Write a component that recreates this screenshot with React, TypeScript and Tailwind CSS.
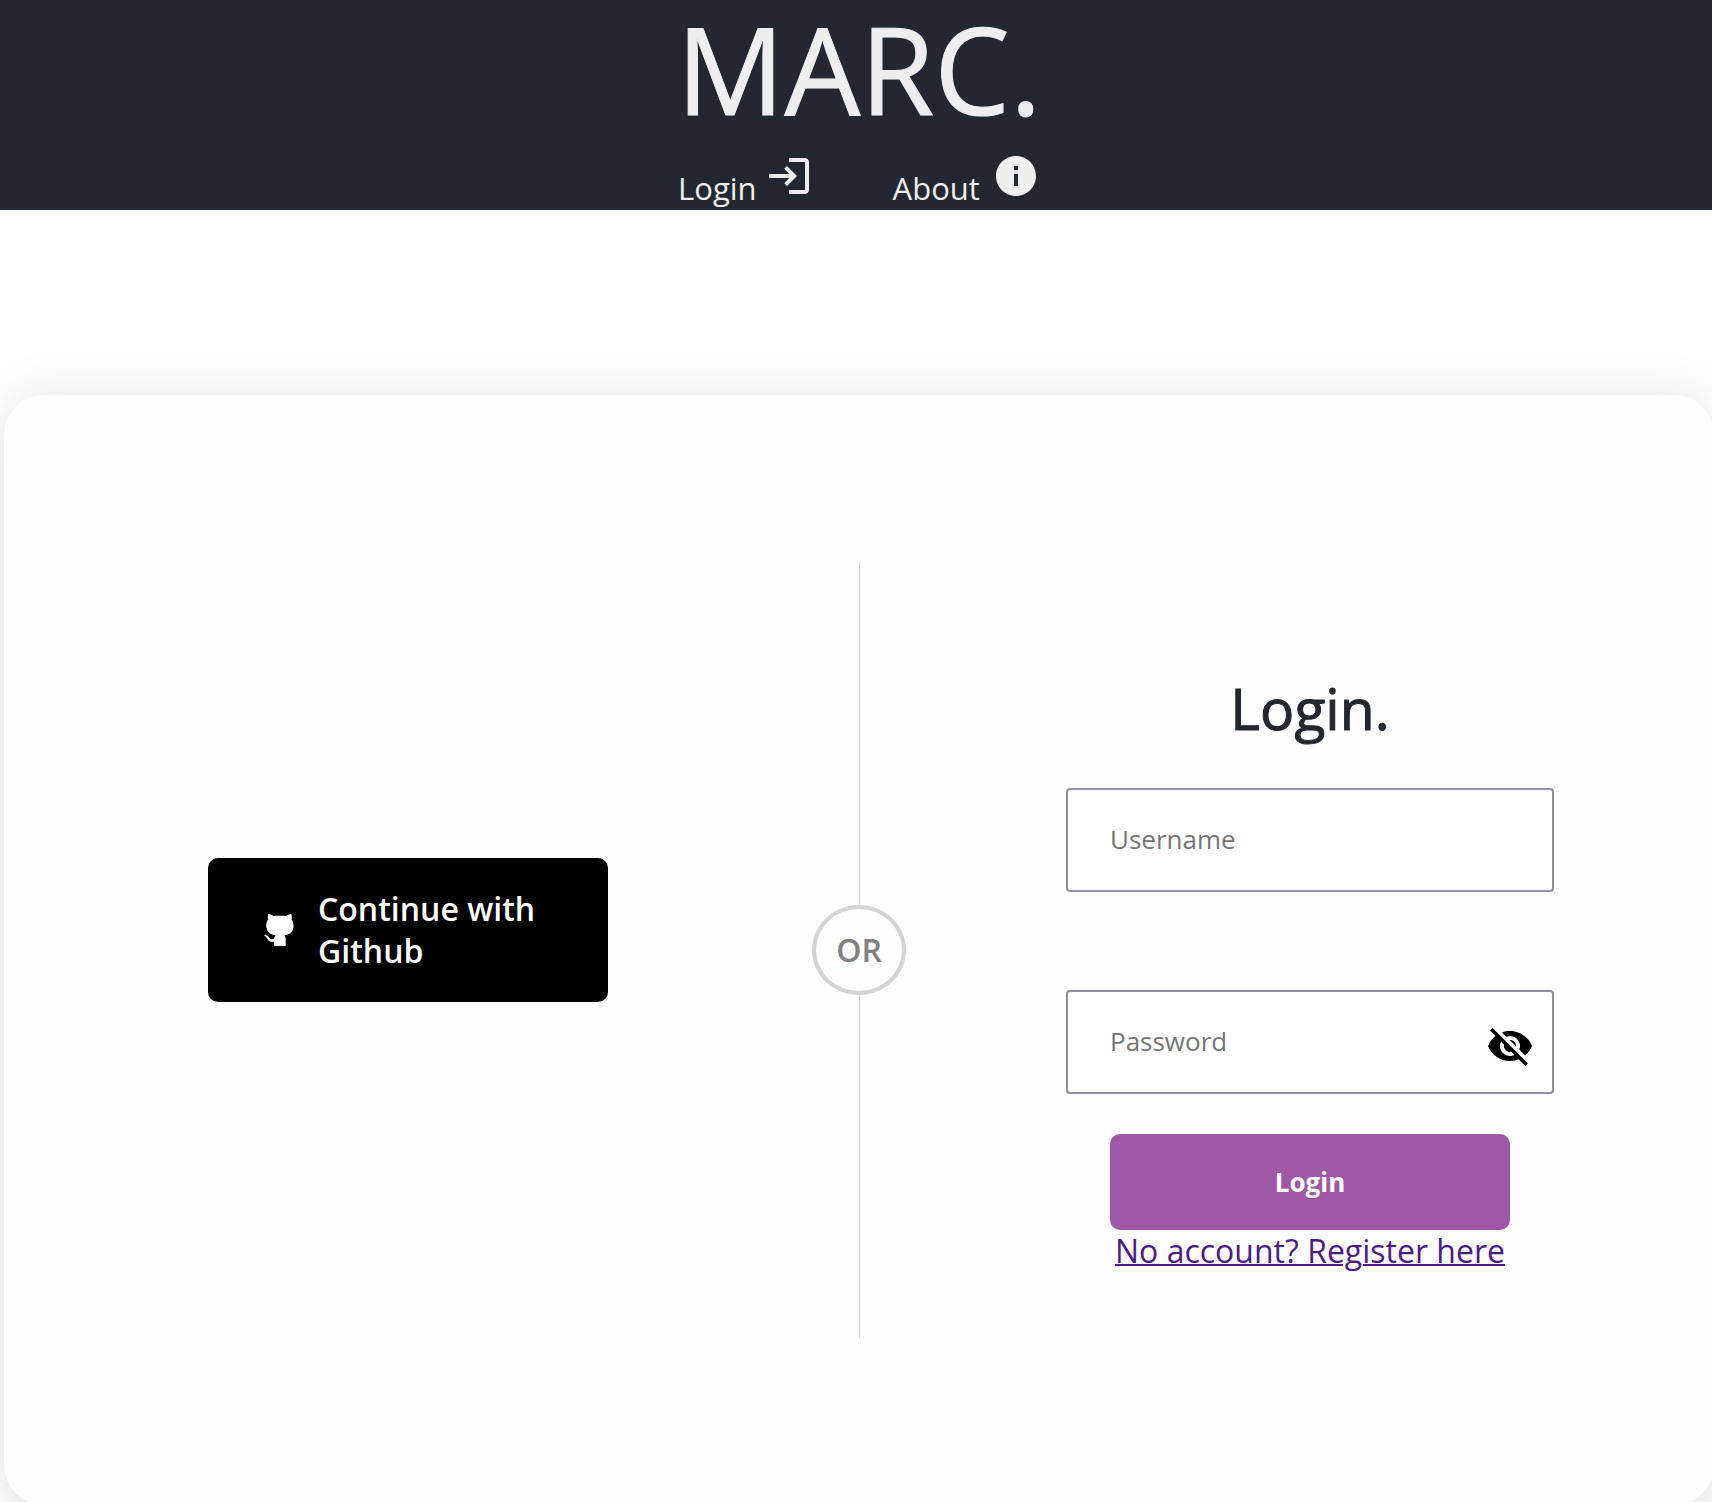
import { useState } from "react";
import { MdLogin, MdInfo, MdVisibilityOff, MdVisibility } from "react-icons/md";

function GithubCat() {
  return (
    <svg viewBox="0 0 30 34" className="h-[34px] w-[30px] shrink-0" fill="#fff" aria-hidden="true">
      <path d="M4.200 1C6.200 1.200 8 2 9.500 3.100C13 2.500 18.500 2.500 22 3.100C23.500 2 25.200 1.200 27.200 1C28 3 27.900 5 27.600 6.400C29 8.200 29.500 10 29.500 12.500C29.500 18.500 26.200 21.500 20.500 22.300C21.400 23.500 21.700 24.500 21.700 26V33H10.200V28.800C5.500 29.500 4 27.500 2.900 25.300C2.300 24.100 1.500 23.300 .4 22.700C.2 22 .9 21.700 1.800 21.900C3.500 22.200 4.400 23.400 5.300 24.700C6.500 26.300 8 26.500 10.200 25.800C10.300 24.300 10.700 23.200 11.500 22.300C5.800 21.500 2.200 18.500 2.200 12.500C2.200 10 2.800 8.200 4.200 6.400C3.700 4.800 3.600 2.800 4.200 1Z" />
    </svg>
  );
}

export default function App() {
  const [shown, setShown] = useState(false);
  const field =
    "h-[104px] w-full rounded border-2 border-[#8f8f9d] bg-white pl-[42px] pr-20 pb-0.5 text-[26px] text-[#232830] placeholder:text-[#757575] placeholder:opacity-100";

  return (
    <div className="flex min-h-screen flex-col overflow-hidden bg-white font-['Open_Sans',sans-serif]">
      <header className="flex h-[210px] flex-col items-center bg-[#232830] pl-1.5 text-[#eee]">
        <h1 className="h-[144px] text-[120px] leading-[138px] [-webkit-text-stroke:1px_#eee]">MARC.</h1>
        <nav className="flex gap-20 text-[31px] leading-10">
          <a href="#login" className="flex gap-2">
            <span className="mt-6">Login</span>
            <MdLogin className="mt-2 size-12" />
          </a>
          <a href="#about" className="flex gap-3">
            <span className="mt-6">About</span>
            <MdInfo className="mt-2 size-12" />
          </a>
        </nav>
      </header>

      <main className="-mr-[2px] mt-[185px] ml-1 flex h-[1110px] shrink-0 rounded-[40px] bg-[#fefefe] shadow-[0_10px_60px_rgba(0,0,0,0.14)]">
        <section className="flex flex-1 items-center justify-center pb-10">
          <button className="flex w-[400px] items-center gap-6 rounded-[10px] bg-black py-[30px] pr-10 pl-14 text-left text-[32px] leading-[42px] font-semibold text-white">
            <GithubCat />
            <span>Continue with Github</span>
          </button>
        </section>

        <div className="flex w-[94px] flex-col items-center py-[167px]">
          <div className="w-px flex-1 bg-[#d3d3d3]" />
          <div className="flex h-[90px] w-[94px] items-center justify-center rounded-[50%] border-4 border-[#d3d3d3] text-[32px] font-semibold text-[#808080]">
            OR
          </div>
          <div className="w-px flex-1 bg-[#d3d3d3]" />
        </div>

        <section className="flex flex-1 items-center justify-center pt-10">
          <form className="flex w-[488px] flex-col items-center" onSubmit={(e) => e.preventDefault()}>
            <h2 className="mb-10 text-[57px] leading-[80px] text-[#232830] [-webkit-text-stroke:1px_#232830]">Login.</h2>
            <input className={field} type="text" placeholder="Username" aria-label="Username" />
            <div className="relative mt-[98px] w-full">
              <input className={field} type={shown ? "text" : "password"} placeholder="Password" aria-label="Password" />
              <button
                type="button"
                aria-label="Show password"
                className="absolute top-8 right-5 text-black"
                onClick={() => setShown(!shown)}
              >
                {shown ? <MdVisibility className="size-12" /> : <MdVisibilityOff className="size-12" />}
              </button>
            </div>
            <button type="submit" className="mt-10 h-24 w-[400px] rounded-[10px] bg-[#9f58a5] text-[26px] font-bold text-white">
              Login
            </button>
            <a href="#register" className="text-[32px] leading-[42px] whitespace-nowrap text-[#4b1b88] underline decoration-2">
              No account? Register here
            </a>
          </form>
        </section>
      </main>
    </div>
  );
}
